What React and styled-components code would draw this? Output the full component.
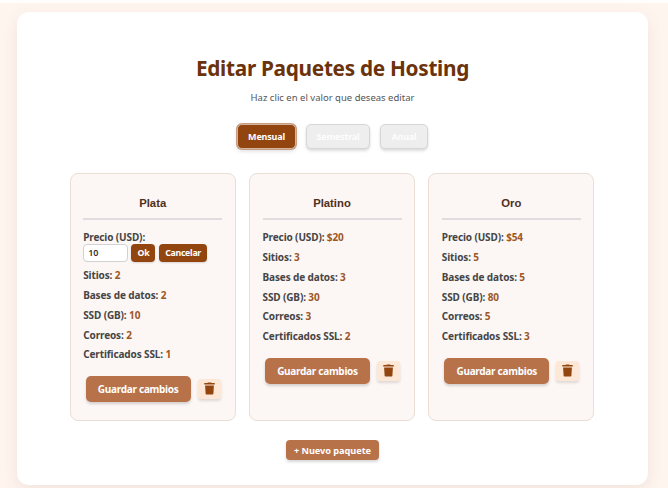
import React from "react";
import styled, { createGlobalStyle } from "styled-components";

const GlobalStyle = createGlobalStyle`
  * { box-sizing: border-box; }
  html, body { margin: 0; background: #fff; overflow: hidden; }
  body { font-family: "Noto Sans", "Open Sans", sans-serif; color: #333; }
  button, input { font-family: inherit; }
`;

const Page = styled.div`
  height: 488px;
  border-top: 3px solid #fffefd;
  background: #fff5ef;
  padding: 9px 20px 0 17px;
  overflow: hidden;
`;

const Panel = styled.main`
  height: 473px;
  display: flex;
  flex-direction: column;
  align-items: center;
  background: #fff;
  border-radius: 12px;
  box-shadow: 0 5px 16px rgba(90, 50, 30, 0.09);
`;

const Title = styled.h1`
  margin: 41px 0 0;
  height: 30px;
  font-size: 20.8px;
  line-height: 30px;
  font-weight: 700;
  letter-spacing: -0.31px;
  white-space: nowrap;
  color: #6b330b;
`;

const Subtitle = styled.p`
  margin: 7px 0 0;
  font-size: 9.5px;
  line-height: 16px;
  color: #555;
`;

const Periods = styled.div`
  display: flex;
  gap: 10px;
  margin-top: 18px;
`;

const Period = styled.button`
  width: ${(p) => p.$width}px;
  height: 25px;
  padding: 0;
  border: 1px solid ${(p) => (p.$active ? "#d3b49d" : "#d6d6d6")};
  border-radius: 5px;
  background: ${(p) => (p.$active ? "#92450f" : "#eee")};
  color: ${(p) => (p.$active ? "#fff" : "#fdfdfd")};
  font-size: 9px;
  font-weight: 700;
  letter-spacing: -0.2px;
  box-shadow: ${(p) => (p.$active ? "0 0 0 1px #c79c80, 0 2px 4px rgba(0,0,0,.15)" : "0 2px 3px rgba(0,0,0,.14)")};
`;

const Packages = styled.div`
  display: grid;
  grid-template-columns: repeat(3, 166px);
  gap: 13.3px;
  margin: 24px 0 0 -1px;
`;

const Package = styled.section`
  height: 248px;
  padding: 19px 12.5px 0;
  border: 1px solid #eaded5;
  border-radius: 8px;
  background: #fcf6f4;
`;

const PackageName = styled.h2`
  height: 27px;
  margin: 0 0 8.2px;
  border-bottom: 2px solid #dfdddf;
  font-family: "Liberation Sans", Arial, sans-serif;
  font-size: 11.3px;
  line-height: 21px;
  text-align: center;
  color: #4e3021;
`;

const Feature = styled.div`
  height: 19.8px;
  font-size: 10px;
  line-height: 19.8px;
  font-weight: 700;
  letter-spacing: -0.12px;
  white-space: nowrap;
  color: #454545;
`;

const Value = styled.span`
  color: #9c5726;
`;

const EditFeature = styled(Feature)`
  height: 38px;
`;

const EditRow = styled.div`
  display: flex;
  gap: 3.7px;
  margin-top: -4.2px;
`;

const ValueInput = styled.input`
  width: 44.5px;
  height: 18px;
  padding: 0 4px;
  border: 1px solid #d2d2d2;
  border-radius: 4px;
  background: #fff;
  color: #333;
  font-size: 9px;
  font-weight: 600;
`;

const SmallButton = styled.button`
  width: ${(p) => p.$width}px;
  height: 18px;
  padding: 0;
  border: 0;
  border-radius: 4px;
  background: #92450f;
  color: #fff;
  font-size: 8.8px;
  font-weight: 700;
  letter-spacing: -0.3px;
  box-shadow: 0 1px 2px rgba(0, 0, 0, 0.14);
`;

const Actions = styled.div`
  display: flex;
  align-items: center;
  gap: 7.2px;
  margin: 10.7px 0 0 2.5px;
`;

const SaveButton = styled.button`
  width: 105px;
  height: 26px;
  padding: 0;
  border: 0;
  border-radius: 5px;
  background: #b8724a;
  color: #fff;
  font-size: 10px;
  font-weight: 700;
  letter-spacing: -0.28px;
  white-space: nowrap;
  box-shadow: 0 2px 3px rgba(0, 0, 0, 0.16);
`;

const DeleteButton = styled.button`
  display: flex;
  align-items: center;
  justify-content: center;
  width: 23px;
  height: 20px;
  padding: 0 0 1px;
  border: 0;
  border-radius: 3px;
  background: #fde8d7;
  color: #92450f;
  box-shadow: 0 2px 3px rgba(0, 0, 0, 0.12);
`;

const NewButton = styled.button`
  width: 93px;
  height: 20px;
  margin: 19px 0 0;
  padding: 0;
  border: 0;
  border-radius: 4px;
  background: #b8724a;
  color: #fff;
  font-size: 9.2px;
  font-weight: 700;
  letter-spacing: -0.05px;
  white-space: nowrap;
  box-shadow: 0 2px 3px rgba(0, 0, 0, 0.16);
`;

const packages = [
  { name: "Plata", price: 10, values: [2, 2, 10, 2, 1], editing: true },
  { name: "Platino", price: 20, values: [3, 3, 30, 3, 2] },
  { name: "Oro", price: 54, values: [5, 5, 80, 5, 3] },
];

const labels = ["Sitios", "Bases de datos", "SSD (GB)", "Correos", "Certificados SSL"];

function TrashIcon() {
  return (
    <svg width="11" height="13" viewBox="0 0 11 13" fill="currentColor" aria-hidden="true">
      <path d="M3.3 1 4 .4h3l.7.6h2.6c.3 0 .5.2.5.5v1H.2v-1c0-.3.2-.5.5-.5z" />
      <path d="M1.1 3.4h8.8l-.5 8.2c0 .6-.5 1-1.1 1H2.7c-.6 0-1.1-.4-1.1-1z" />
    </svg>
  );
}

function Price({ item }) {
  if (!item.editing) {
    return <Feature>Precio (USD): <Value>${item.price}</Value></Feature>;
  }
  return (
    <EditFeature>
      Precio (USD):
      <EditRow>
        <ValueInput defaultValue={item.price} />
        <SmallButton $width={24}>Ok</SmallButton>
        <SmallButton $width={48}>Cancelar</SmallButton>
      </EditRow>
    </EditFeature>
  );
}

export default function App() {
  return (
    <Page>
      <GlobalStyle />
      <Panel>
        <Title>Editar Paquetes de Hosting</Title>
        <Subtitle>Haz clic en el valor que deseas editar</Subtitle>
        <Periods>
          <Period $active $width={59}>Mensual</Period>
          <Period $width={64}>Semestral</Period>
          <Period $width={48}>Anual</Period>
        </Periods>
        <Packages>
          {packages.map((item) => (
            <Package key={item.name}>
              <PackageName>{item.name}</PackageName>
              <Price item={item} />
              {labels.map((label, i) => (
                <Feature key={label}>{label}: <Value>{item.values[i]}</Value></Feature>
              ))}
              <Actions>
                <SaveButton>Guardar cambios</SaveButton>
                <DeleteButton aria-label="Eliminar"><TrashIcon /></DeleteButton>
              </Actions>
            </Package>
          ))}
        </Packages>
        <NewButton>+ Nuevo paquete</NewButton>
      </Panel>
    </Page>
  );
}
